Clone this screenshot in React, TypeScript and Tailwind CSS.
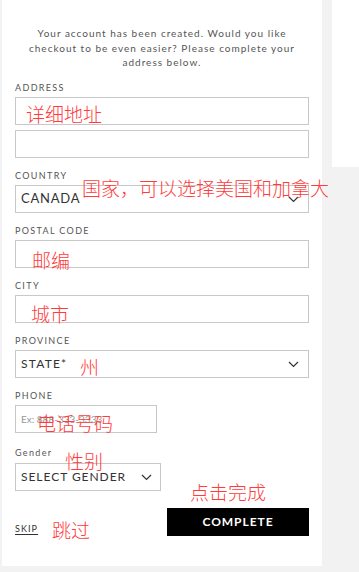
import React from 'react';

const Label: React.FC<{ children: React.ReactNode; className?: string }> = ({ children, className }) => (
  <div className={`h-3 text-[9px] leading-3 tracking-[0.15em] text-[#555] ${className ?? ''}`}>{children}</div>
);

const Chevron = () => (
  <svg width="11" height="7" viewBox="0 0 11 7" fill="none">
    <path d="M1 1l4.5 4.5L10 1" stroke="#333" strokeWidth="1.2" />
  </svg>
);

const Note: React.FC<{ children: React.ReactNode; className: string }> = ({ children, className }) => (
  <span
    className={`absolute text-[19px] leading-5 font-light text-[#ff3b3b] whitespace-nowrap ${className}`}
    style={{ fontFamily: '"Noto Sans CJK SC", sans-serif' }}
  >
    {children}
  </span>
);

export default function App() {
  return (
    <div className="relative w-[359px] h-[572px] bg-[#f2f2f2] overflow-hidden" style={{ fontFamily: 'Lato, "Open Sans", sans-serif' }}>
      <div className="flex items-start gap-[10px] pl-[2px]">
        {/* Form panel */}
        <div className="w-[320px] h-[566px] bg-white px-[13px] pt-[26px] flex flex-col">
          <p className="text-center text-[10px] leading-[14.5px] tracking-[0.1em] text-[#555] px-[4px]">
            Your account has been created. Would you like checkout to be even easier? Please complete your address below.
          </p>

          <Label className="mt-[12.5px]">ADDRESS</Label>
          <div className="mt-[3px] h-[28px] w-[294px] border border-[#c8c8c8]" />
          <div className="mt-[5px] h-[28px] w-[294px] border border-[#c8c8c8]" />

          <Label className="mt-[12px]">COUNTRY</Label>
          <div className="mt-[3px] h-[28px] w-[294px] border border-[#c8c8c8] flex items-center justify-between pl-[5px] pr-[9px]">
            <span className="text-[13px] tracking-[0.06em] text-[#333]">CANADA</span>
            <Chevron />
          </div>

          <Label className="mt-[12px]">POSTAL CODE</Label>
          <div className="mt-[3px] h-[28px] w-[294px] border border-[#c8c8c8]" />

          <Label className="mt-[12px]">CITY</Label>
          <div className="mt-[3px] h-[28px] w-[294px] border border-[#c8c8c8]" />

          <Label className="mt-[12px]">PROVINCE</Label>
          <div className="mt-[3px] h-[28px] w-[294px] border border-[#c8c8c8] flex items-center justify-between pl-[5px] pr-[9px]">
            <span className="text-[12px] tracking-[0.1em] text-[#333]">STATE*</span>
            <Chevron />
          </div>

          <Label className="mt-[12px]">PHONE</Label>
          <div className="mt-[3px] h-[28px] w-[142px] border border-[#c8c8c8] flex items-center pl-[5px]">
            <span className="text-[10px] text-[#999]">Ex: 888-333-3333</span>
          </div>

          <Label className="mt-[14px] tracking-[0.1em]">Gender</Label>
          <div className="mt-[4px] h-[28px] w-[146px] border border-[#c8c8c8] flex items-center justify-between pl-[5px] pr-[8px]">
            <span className="text-[12px] tracking-[0.08em] text-[#333]">SELECT GENDER</span>
            <Chevron />
          </div>

          <div className="mt-[17px] flex justify-between items-start">
            <span className="mt-[15px] text-[9px] leading-3 tracking-[0.12em] text-[#333] underline underline-offset-2">SKIP</span>
            <button className="h-[28px] w-[142px] bg-black text-white text-[12px] font-bold tracking-[0.08em]">COMPLETE</button>
          </div>
        </div>

        {/* Side card */}
        <div className="w-[27px] h-[167px] bg-white" />
      </div>

      <Note className="left-[26px] top-[104px]">详细地址</Note>
      <Note className="left-[82px] top-[178px]">国家，可以选择美国和加拿大</Note>
      <Note className="left-[32px] top-[250px]">邮编</Note>
      <Note className="left-[31px] top-[304px]">城市</Note>
      <Note className="left-[80px] top-[357px]">州</Note>
      <Note className="left-[37px] top-[413px]">电话号码</Note>
      <Note className="left-[65px] top-[451px]">性别</Note>
      <Note className="left-[190px] top-[482px]">点击完成</Note>
      <Note className="left-[52px] top-[520px]">跳过</Note>
    </div>
  );
}
